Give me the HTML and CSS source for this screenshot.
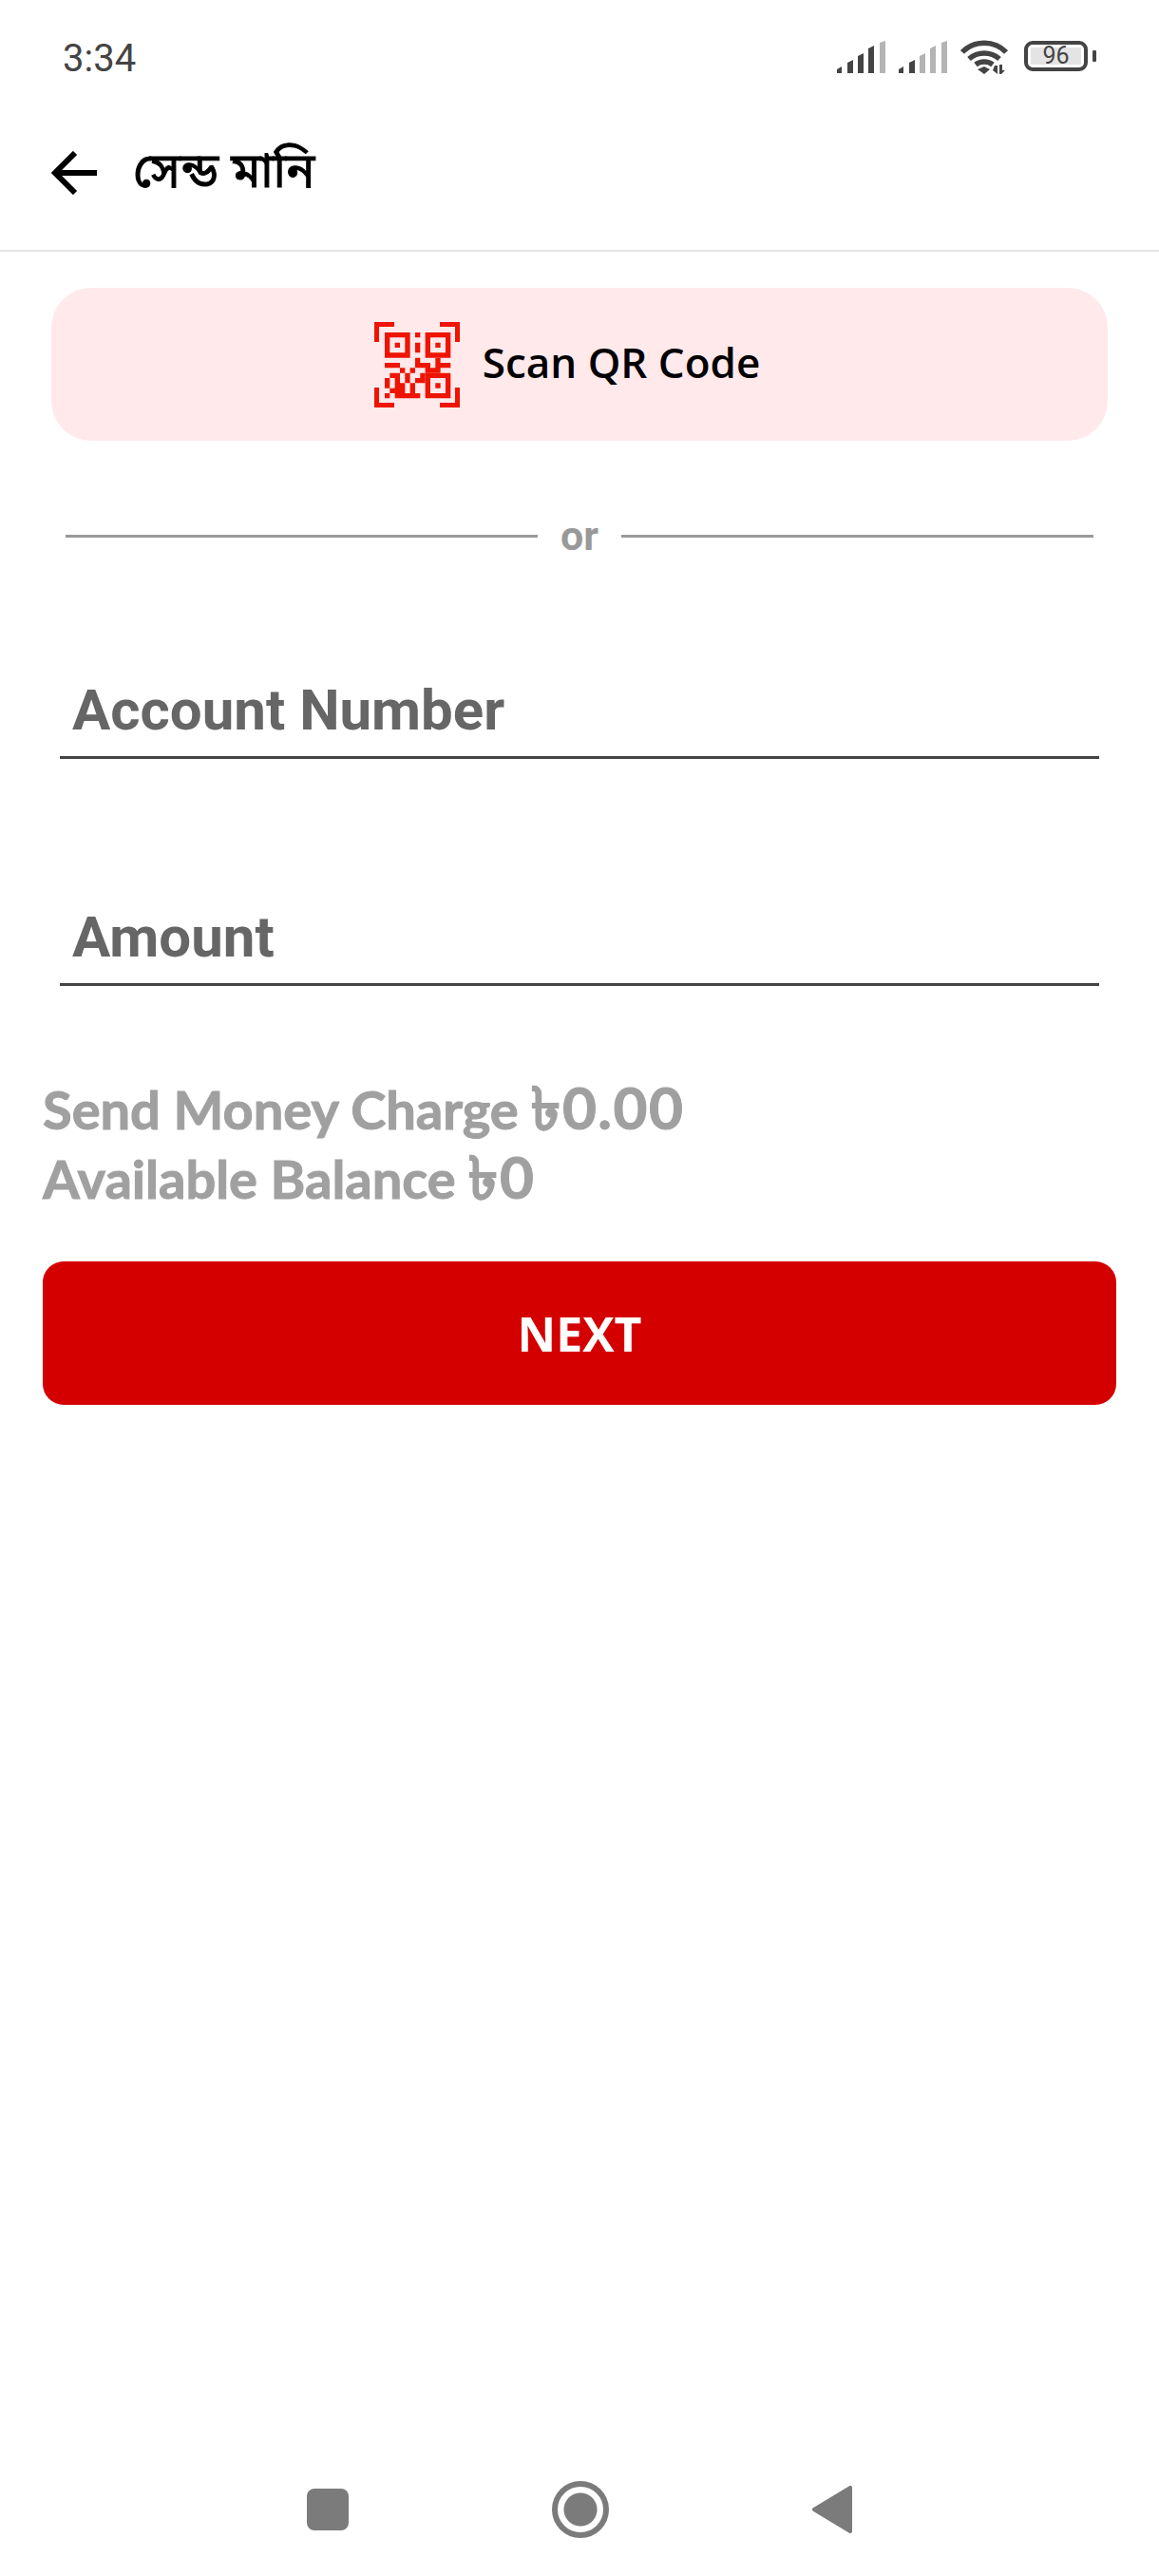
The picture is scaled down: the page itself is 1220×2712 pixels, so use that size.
FILE: index.html
```html
<!DOCTYPE html>
<html lang="bn">
<head>
    <meta charset="UTF-8">
    <meta name="viewport" content="width=device-width, initial-scale=1.0">
    <title>সেন্ড মানি</title>
    <link rel="stylesheet" href="styles.css">
</head>
<body>
    <div class="status-bar">
        <span class="clock">3:34</span>
        <div class="status-icons">
            <svg class="signal" width="51" height="34" viewBox="0 0 51 34">
                <path fill="#444" d="M0 30l5-3v7H0zM11 23l6-3v14h-6zM22 16l6-3v21h-6zM33 8l6-3v29h-6z"/>
                <path fill="#b4b4b4" d="M45 2l6-2v34h-6z"/>
            </svg>
            <svg class="signal second" width="51" height="34" viewBox="0 0 51 34">
                <path fill="#444" d="M0 30l5-3v7H0zM11 23l6-3v14h-6z"/>
                <path fill="#b4b4b4" d="M22 16l6-3v21h-6zM33 8l6-3v29h-6zM45 2l6-2v34h-6z"/>
            </svg>
            <svg class="wifi" width="50" height="36" viewBox="0 0 50 36">
                <path fill="none" stroke="#444" stroke-width="5.5" d="M2 13C14 0 36 0 48 13M9 20c9-8 23-8 32 0M16 26c5-4 13-4 18 0"/>
                <path fill="#444" d="M18 31l7-3 6 3-6 5zM36 27h3v9l-5-4zM41 26h3v6h3l-4 4h-2z"/>
            </svg>
            <div class="battery"><span class="battery-level">96</span></div>
            <div class="battery-nub"></div>
        </div>
    </div>

    <header class="app-bar">
        <svg class="back" width="48" height="46" viewBox="0 0 48 46">
            <path fill="none" stroke="#000" stroke-width="6" d="M48 23H4M25 2L4 23l21 21"/>
        </svg>
        <h1 class="title">সেন্ড মানি</h1>
    </header>

    <main class="content">
        <button class="scan-btn">
            <svg class="qr" width="90" height="90" viewBox="0 0 90 90">
                <path fill="#ee1400" d="M0 0h21v5H5v16H0zM69 0h21v21h-5V5H69zM0 69h5v16h16v5H0zM85 69h5v21H69v-5h16z"/>
                <g transform="translate(11 11) scale(5.33)">
                    <path fill="#ee1400" fill-rule="evenodd" d="M0 0h5v5H0zM1 1v3h3V1zM2 2h1v1H2zM8 0h5v5H8zM9 1v3h3V1zM10 2h1v1h-1zM8 8h5v5H8zM9 9v3h3V9zM10 10h1v1h-1z"/>
                    <path fill="#ee1400" d="M6 0h1v1H6zM6 2h1v2H6zM6 5h1v1H6zM10 5h1v1h-1zM0 6h3v1H0zM6 6h3v1H6zM10 6h3v1h-3zM3 7h1v1H3zM5 7h1v1H5zM8 7h3v1H8zM1 8h2v1H1zM4 8h1v1H4zM7 8h1v1H7zM0 9h1v2H0zM2 9h1v1H2zM4 9h1v1H4zM6 9h2v1H6zM2 10h2v1H2zM5 10h1v2H5zM1 11h3v1H1zM0 12h1v1H0zM2 12h5v1H2z"/>
                </g>
            </svg>
            <span class="scan-label">Scan QR Code</span>
        </button>

        <div class="divider"><span>or</span></div>

        <div class="field first"><span>Account Number</span></div>
        <div class="field"><span>Amount</span></div>

        <div class="info">
            <p>Send Money Charge <span class="amount">৳0.00</span></p>
            <p>Available Balance <span class="amount">৳0</span></p>
        </div>

        <button class="next-btn">NEXT</button>
    </main>

    <nav class="nav-bar">
        <div class="nav-square"></div>
        <div class="nav-home"></div>
        <svg class="nav-tri" width="42" height="50" viewBox="0 0 42 50">
            <path fill="#7b7b7b" stroke="#7b7b7b" stroke-width="4" stroke-linejoin="round" d="M40 2v46L2 25z"/>
        </svg>
    </nav>
</body>
</html>
```

FILE: styles.css
```css
* {
    box-sizing: border-box;
}

body {
    margin: 0;
    width: 1220px;
    height: 2712px;
    display: flex;
    flex-direction: column;
    background: #fff;
    font-family: 'Roboto', sans-serif;
}

.status-bar {
    height: 80px;
    padding: 40px 66px 0 66px;
    display: flex;
    justify-content: space-between;
    align-items: flex-start;
}

.clock {
    font-family: 'Roboto', sans-serif;
    font-size: 40px;
    line-height: 44px;
    color: #444;
}

.status-icons {
    display: flex;
    align-items: flex-start;
    margin-top: 3px;
}

.signal.second,
.wifi {
    margin-left: 14px;
}

.wifi {
    margin-top: -1px;
}

.battery {
    width: 67px;
    height: 32px;
    margin-left: 17px;
    border: 4px solid #444;
    border-radius: 9px;
    padding: 3px;
}

.battery-level {
    display: block;
    height: 18px;
    background: #e4e4e4;
    font-size: 25px;
    line-height: 18px;
    text-align: center;
    color: #444;
}

.battery-nub {
    width: 4px;
    height: 12px;
    margin: 10px 0 0 5px;
    background: #444;
    border-radius: 1px;
}

.app-bar {
    height: 185px;
    padding: 20px 0 0 54px;
    display: flex;
    align-items: center;
    border-bottom: 2px solid #e4e4e4;
}

.title {
    margin: 5px 0 0 38px;
    font-family: 'Noto Sans Bengali', 'Noto Sans', 'DejaVu Sans', sans-serif;
    font-size: 50.5px;
    font-weight: 400;
    -webkit-text-stroke: 1px #000;
    color: #000;
}

.content {
    padding: 38px 45px 0;
}

.scan-btn {
    width: 1112px;
    height: 161px;
    margin: 0 0 0 9px;
    display: flex;
    align-items: center;
    justify-content: center;
    gap: 24px;
    padding: 0 26px 0 0;
    border: none;
    border-radius: 42px;
    background: #ffe9eb;
    font-family: 'Open Sans', sans-serif;
    font-size: 44px;
    font-weight: 600;
    color: #000;
}

.scan-label {
    margin-top: -6px;
}

.divider {
    margin: 72px 24px 0;
    height: 56px;
    display: flex;
    align-items: center;
    gap: 24px;
    font-size: 43px;
    font-weight: 700;
    color: #999;
}

.divider::before,
.divider::after {
    content: "";
    flex: 1;
    height: 3px;
    background: #999;
}

.field {
    width: 1094px;
    height: 100px;
    margin: 139px 0 0 18px;
    padding: 0 0 0 13px;
    display: flex;
    align-items: center;
    border-bottom: 3px solid #444;
    font-size: 60px;
    font-weight: 700;
    color: #666;
}

.field.first {
    margin-top: 107px;
}

.info {
    margin-top: 93px;
    font-family: 'Lato', sans-serif;
    font-size: 56px;
    font-weight: 700;
    line-height: 73px;
    color: #a0a0a0;
    -webkit-text-stroke: 1px #a0a0a0;
}

.info p {
    margin: 0;
}

.amount {
    font-size: 62px;
    line-height: 1;
    letter-spacing: 1.5px;
}

.next-btn {
    width: 1130px;
    height: 151px;
    margin-top: 51px;
    display: block;
    padding: 0;
    border: none;
    border-radius: 22px;
    background: #d40000;
    font-family: 'Open Sans', sans-serif;
    font-size: 50px;
    font-weight: 700;
    color: #fff;
}

.nav-bar {
    margin-top: auto;
    height: 100px;
    padding: 0 0 40px 323px;
    display: flex;
    align-items: center;
}

.nav-square {
    width: 44px;
    height: 44px;
    border-radius: 8px;
    background: #7b7b7b;
}

.nav-home {
    width: 60px;
    height: 60px;
    margin-left: 214px;
    border: 6px solid #7b7b7b;
    border-radius: 50%;
    background: radial-gradient(circle, #7b7b7b 0 17px, #fff 18px);
}

.nav-tri {
    margin-left: 214px;
}
```
